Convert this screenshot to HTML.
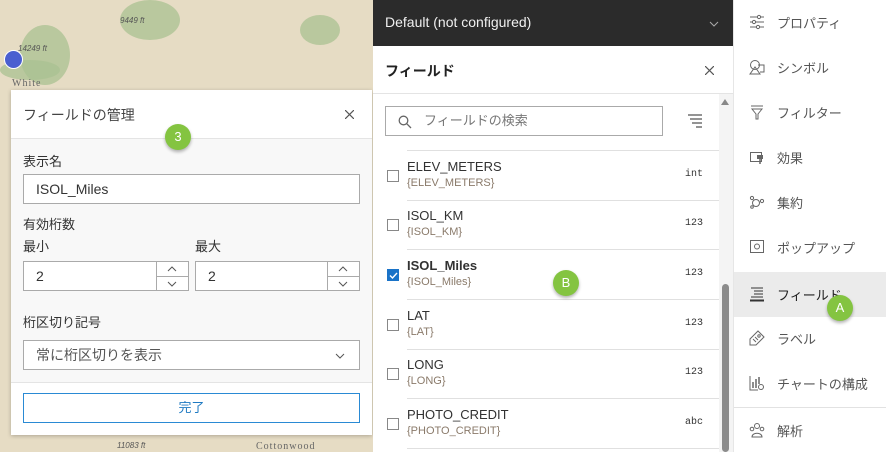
<!DOCTYPE html>
<html><head><meta charset="utf-8"><style>
*{box-sizing:border-box;margin:0;padding:0}
body{width:886px;height:452px;overflow:hidden;position:relative;font-family:"Liberation Sans","Noto Sans CJK JP",sans-serif;background:#fff}
.map{position:absolute;left:0;top:0;width:373px;height:452px;background:#e6dcc4;overflow:hidden}
.blob{position:absolute;background:#a9c292;border-radius:50%;opacity:.75}
.dlg{position:absolute;left:11px;top:90px;width:361px;height:345px;background:#f8f8f8;box-shadow:0 1px 4px rgba(0,0,0,.25)}
.dh{height:49px;background:#fff;border-bottom:1px solid #e4e4e4;position:relative}
.lbl{position:absolute;font-size:13px;color:#323232}
.inp{position:absolute;background:#fff;border:1px solid #aaa;font-size:14px;color:#333;padding-left:12px;line-height:28px;height:30px}
.sp{position:absolute;right:0;top:0;width:32px;height:28px;border-left:1px solid #aaa}
.sp div{height:14px;position:relative}
.sp div+div{border-top:1px solid #aaa;height:14px}
.sp svg{position:absolute;left:10px;top:4px}
.badge{position:absolute;width:26px;height:26px;border-radius:50%;background:#84c441;color:#fff;font-size:13px;text-align:center;line-height:26px;box-shadow:0 2px 3px rgba(0,0,0,.3)}
.mid{position:absolute;left:373px;top:0;width:360px;height:452px;background:#fff}
.row{position:absolute;left:0;width:350px;height:50px}
.row .cb{position:absolute;left:14px;top:19px;width:12px;height:12px;border:1px solid #888;background:#fff}
.row .n{position:absolute;left:34px;top:8px;font-size:13px;color:#323232}
.row .s{position:absolute;left:34px;top:26px;font-size:11px;color:#8a7a6a}
.row .t{position:absolute;left:312px;top:18px;font-size:10px;color:#333;font-family:"Liberation Mono",monospace}
.row .ln{position:absolute;left:34px;right:0;bottom:0;border-top:1px solid #e0e0e0}
.side{position:absolute;left:733px;top:0;width:153px;height:452px;background:#fff;border-left:1px solid #e6e6e6}
.it{position:absolute;left:0;width:153px;height:45px;font-size:13px;color:#555}
.it span{position:absolute;left:43px;top:13px}
.it svg{position:absolute;left:15px;top:14px}
</style></head><body>
<div class="map">
<div class="blob" style="left:120px;top:0;width:60px;height:40px"></div>
<div class="blob" style="left:20px;top:25px;width:50px;height:60px"></div>
<div class="blob" style="left:300px;top:15px;width:40px;height:30px"></div>
<div class="blob" style="left:0;top:60px;width:60px;height:20px"></div>
<div style="position:absolute;left:4px;top:50px;width:19px;height:19px;border-radius:50%;background:#4a5fd0;border:1px solid #fff"></div>
<div style="position:absolute;left:120px;top:16px;font-size:8px;font-style:italic;color:#555">9449 ft</div>
<div style="position:absolute;left:18px;top:44px;font-size:8px;font-style:italic;color:#555">14249 ft</div>
<div style="position:absolute;left:12px;top:78px;font-size:10px;color:#666;font-family:'Liberation Serif',serif;letter-spacing:1px">White</div>
<div style="position:absolute;left:117px;top:441px;font-size:8px;font-style:italic;color:#555">11083 ft</div>
<div style="position:absolute;left:256px;top:441px;font-size:10px;color:#666;font-family:'Liberation Serif',serif;letter-spacing:1px">Cottonwood</div>
</div>
<div class="dlg">
<div class="dh"><div class="lbl" style="left:12px;top:15px;font-size:14px;color:#444">フィールドの管理</div><svg style="position:absolute;right:18px;top:20px" width="9" height="9"><path d="M0 0L9 9M9 0L0 9" stroke="#555" stroke-width="1.2"/></svg></div>
<div class="lbl" style="left:12px;top:61px">表示名</div>
<div class="inp" style="left:12px;top:84px;width:337px">ISOL_Miles</div>
<div class="lbl" style="left:12px;top:124px">有効桁数</div>
<div class="lbl" style="left:12px;top:146px">最小</div>
<div class="lbl" style="left:184px;top:146px">最大</div>
<div class="inp" style="left:12px;top:171px;width:166px">2<div class="sp"><div><svg width="10" height="6"><path d="M1 5L5 1L9 5" stroke="#555" fill="none"/></svg></div><div><svg width="10" height="6"><path d="M1 1L5 5L9 1" stroke="#555" fill="none"/></svg></div></div></div>
<div class="inp" style="left:184px;top:171px;width:165px">2<div class="sp"><div><svg width="10" height="6"><path d="M1 5L5 1L9 5" stroke="#555" fill="none"/></svg></div><div><svg width="10" height="6"><path d="M1 1L5 5L9 1" stroke="#555" fill="none"/></svg></div></div></div>
<div class="lbl" style="left:12px;top:222px">桁区切り記号</div>
<div class="inp" style="left:12px;top:250px;width:337px;color:#555">常に桁区切りを表示<svg style="position:absolute;right:14px;top:12px" width="10" height="6"><path d="M1 1L5 5L9 1" stroke="#555" fill="none"/></svg></div>
<div style="position:absolute;left:0;top:292px;width:361px;height:53px;background:#fff;border-top:1px solid #e4e4e4"></div>
<div style="position:absolute;left:12px;top:303px;width:337px;height:30px;border:1px solid #2a8ad4;background:#fff;color:#1f7ac2;text-align:center;line-height:28px;font-size:13px">完了</div>
</div>
<div class="badge" style="left:165px;top:124px">3</div>
<div class="mid">
<div style="position:absolute;left:0;top:0;width:360px;height:46px;background:#2b2b2b;color:#f0f0f0;font-size:14px"><span style="position:absolute;left:12px;top:14px">Default (not configured)</span><svg style="position:absolute;right:14px;top:21px" width="10" height="6"><path d="M1 1L5 5L9 1" stroke="#aaa" fill="none"/></svg></div>
<div style="position:absolute;left:0;top:46px;width:360px;height:48px;border-bottom:1px solid #e4e4e4"><span style="position:absolute;left:12px;top:15px;font-size:14px;color:#222;font-weight:bold">フィールド</span><svg style="position:absolute;right:19px;top:20px" width="9" height="9"><path d="M0 0L9 9M9 0L0 9" stroke="#555" stroke-width="1.2"/></svg></div>
<div style="position:absolute;left:12px;top:106px;width:278px;height:30px;border:1px solid #aaa;font-size:13px;color:#777;line-height:28px;padding-left:38px">フィールドの検索
<svg style="position:absolute;left:12px;top:8px" width="14" height="14"><circle cx="5.5" cy="5.5" r="4.3" fill="none" stroke="#666" stroke-width="1.3"/><line x1="8.6" y1="8.6" x2="13" y2="13" stroke="#666" stroke-width="1.3"/></svg></div>
<svg style="position:absolute;left:315px;top:114px" width="15" height="16"><path d="M0 1H14M2 5H14M4 9H14M8 13H14" stroke="#555" stroke-width="1.2"/></svg>
<div style="position:absolute;left:34px;top:150px;width:312px;border-top:1px solid #e0e0e0"></div>
<div class="row" style="top:151px"><div class="cb"></div><div class="n">ELEV_METERS</div><div class="s">{ELEV_METERS}</div><div class="t">int</div><div class="ln"></div></div>
<div class="row" style="top:200px"><div class="cb"></div><div class="n">ISOL_KM</div><div class="s">{ISOL_KM}</div><div class="t">123</div><div class="ln"></div></div>
<div class="row" style="top:250px"><div class="cb" style="background:#1a73c8;border-color:#1a73c8"><svg style="position:absolute;left:1px;top:1px" width="9" height="9"><path d="M1 4.5L3.5 7L8 2" stroke="#fff" stroke-width="1.4" fill="none"/></svg></div><div class="n" style="font-weight:bold">ISOL_Miles</div><div class="s">{ISOL_Miles}</div><div class="t">123</div><div class="ln"></div></div>
<div class="row" style="top:300px"><div class="cb"></div><div class="n">LAT</div><div class="s">{LAT}</div><div class="t">123</div><div class="ln"></div></div>
<div class="row" style="top:349px"><div class="cb"></div><div class="n">LONG</div><div class="s">{LONG}</div><div class="t">123</div><div class="ln"></div></div>
<div class="row" style="top:399px"><div class="cb"></div><div class="n">PHOTO_CREDIT</div><div class="s">{PHOTO_CREDIT}</div><div class="t">abc</div><div class="ln"></div></div>
<div style="position:absolute;left:346px;top:94px;width:14px;height:358px;background:#f4f4f4"></div>
<div style="position:absolute;left:348px;top:99px;width:0;height:0;border-left:4px solid transparent;border-right:4px solid transparent;border-bottom:6px solid #888"></div>
<div style="position:absolute;left:349px;top:284px;width:7px;height:168px;background:#8c8c8c;border-radius:4px"></div>
<div class="badge" style="left:180px;top:270px">B</div>
</div>
<div class="side">
<div class="it" style="top:0"><svg width="16" height="16"><path d="M1 3H15M1 8H15M1 13H15" stroke="#666"/><circle cx="10" cy="3" r="1.6" fill="#fff" stroke="#666"/><circle cx="5" cy="8" r="1.6" fill="#fff" stroke="#666"/><circle cx="9" cy="13" r="1.6" fill="#fff" stroke="#666"/></svg><span>プロパティ</span></div>
<div class="it" style="top:45px"><svg width="16" height="16"><circle cx="6" cy="6" r="4.5" fill="none" stroke="#666"/><path d="M1 15L6 8L11 15Z" fill="none" stroke="#666"/><path d="M9 6H15V13H11" fill="none" stroke="#666"/></svg><span>シンボル</span></div>
<div class="it" style="top:90px"><svg width="16" height="16"><path d="M2 2H14M3 5H13L9 10V15H7V10Z" fill="none" stroke="#666"/></svg><span>フィルター</span></div>
<div class="it" style="top:135px"><svg width="16" height="16"><rect x="1.5" y="3.5" width="11" height="9" fill="none" stroke="#666"/><rect x="8" y="6" width="6" height="4" fill="#666"/><path d="M11 10V15" stroke="#666" stroke-width="1.5"/></svg><span>効果</span></div>
<div class="it" style="top:180px"><svg width="16" height="16"><circle cx="7" cy="9" r="3.5" fill="none" stroke="#666"/><circle cx="3" cy="4" r="1.6" fill="none" stroke="#666"/><circle cx="13" cy="7" r="1.6" fill="none" stroke="#666"/><circle cx="3" cy="13" r="1.3" fill="none" stroke="#666"/></svg><span>集約</span></div>
<div class="it" style="top:225px"><svg width="16" height="16"><rect x="1.5" y="1.5" width="13" height="12" fill="none" stroke="#666"/><circle cx="8" cy="7.5" r="2.5" fill="none" stroke="#666"/></svg><span>ポップアップ</span></div>
<div class="it" style="top:272px;background:#ebebeb;color:#222"><svg width="16" height="16"><path d="M2 2H14M5 5H14M5 8H14M2 11H14" stroke="#333"/><path d="M1 14.5H15" stroke="#333" stroke-width="2"/></svg><span>フィールド</span></div>
<div class="it" style="top:316px"><svg width="16" height="16"><path d="M9 1L15 7L7 15L1 15L1 9Z" fill="none" stroke="#666"/><circle cx="10" cy="6" r="1.2" fill="none" stroke="#666"/><path d="M4 9L7 12M6 7L9 10" stroke="#666"/></svg><span>ラベル</span></div>
<div class="it" style="top:361px"><svg width="16" height="16"><path d="M1 1V15H9" fill="none" stroke="#666"/><path d="M4 13V7M7 13V4M10 9V2" stroke="#666" stroke-width="1.5"/><circle cx="12" cy="12" r="2.5" fill="none" stroke="#666"/></svg><span>チャートの構成</span></div>
<div style="position:absolute;left:0;top:407px;width:153px;border-top:1px solid #e2e2e2"></div>
<div class="it" style="top:408px"><svg width="16" height="16"><circle cx="8" cy="4" r="2.5" fill="none" stroke="#666"/><circle cx="3" cy="7" r="1.8" fill="none" stroke="#666"/><circle cx="13" cy="7" r="1.8" fill="none" stroke="#666"/><path d="M3 15C3 10 13 10 13 15Z" fill="none" stroke="#666"/></svg><span>解析</span></div>
</div>
<div class="badge" style="left:827px;top:295px">A</div>
</body></html>
